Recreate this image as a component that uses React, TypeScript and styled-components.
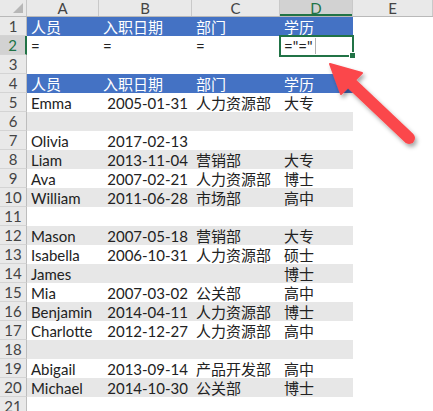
import React from "react";
import styled, { createGlobalStyle, css } from "styled-components";

const Global = createGlobalStyle`
  html, body { margin: 0; padding: 0; background: #fff; }
  body { width: 433px; height: 411px; overflow: hidden; }
`;

const COLS = "27px 72px 93px 88px 73px 80px";
const GREEN = "#217346";
const FONT = `Lato, "Noto Sans CJK SC", sans-serif`;

const Page = styled.div`
  position: relative;
  width: 433px;
  height: 411px;
  overflow: hidden;
  font-family: ${FONT};
  font-size: 15px;
  color: #222;
`;

const Sheet = styled.div`
  display: flex;
  flex-direction: column;
`;

const HeadRow = styled.div`
  display: grid;
  grid-template-columns: ${COLS};
  height: 17px;
  background: #e9e9e9;
  border-bottom: 1px solid #b9b9b9;
  box-sizing: border-box;
`;

const Corner = styled.div`
  position: relative;
  border-right: 1px solid #c6c6c6;
  &::after {
    content: "";
    position: absolute;
    right: 3px;
    bottom: 3px;
    width: 0;
    height: 0;
    border-left: 10px solid transparent;
    border-bottom: 10px solid #b7b7b7;
  }
`;

const ColHead = styled.div<{ $sel?: boolean }>`
  display: flex;
  align-items: center;
  justify-content: center;
  border-right: 1px solid #c9c9c9;
  color: #444;
  font-size: 15px;
  line-height: 16px;
  ${(p) =>
    p.$sel &&
    css`
      background: #d2d2d2;
      color: ${GREEN};
      box-shadow: inset 0 -2px 0 ${GREEN};
    `}
`;

const Row = styled.div`
  display: grid;
  grid-template-columns: ${COLS};
  height: 19px;
`;

const RowHead = styled.div<{ $sel?: boolean }>`
  display: flex;
  align-items: flex-end;
  justify-content: center;
  background: #e9e9e9;
  border-right: 1px solid #bdbdbd;
  border-bottom: 1px solid #d4d4d4;
  box-sizing: border-box;
  color: #444;
  line-height: 17px;
  ${(p) =>
    p.$sel &&
    css`
      background: #d2d2d2;
      color: ${GREEN};
      border-right: 2px solid ${GREEN};
    `}
`;

type Tone = "blue" | "gray" | "white";

const Cell = styled.div<{ $tone: Tone; $align?: "left" | "right"; $sel?: boolean }>`
  position: relative;
  display: flex;
  align-items: flex-end;
  justify-content: ${(p) => (p.$align === "right" ? "flex-end" : "flex-start")};
  padding: 0 4px 0 4px;
  white-space: nowrap;
  line-height: 17px;
  background: ${(p) => (p.$tone === "blue" ? "#4472c4" : p.$tone === "gray" ? "#e7e7e7" : "#fff")};
  color: ${(p) => (p.$tone === "blue" ? "#fff" : "#222")};
  ${(p) =>
    p.$sel &&
    css`
      &::after {
        content: "";
        position: absolute;
        left: -1px;
        top: -1px;
        right: -1px;
        bottom: -2px;
        border: 2px solid ${GREEN};
      }
      &::before {
        content: "";
        position: absolute;
        right: -3px;
        bottom: -4px;
        width: 5px;
        height: 5px;
        background: ${GREEN};
        border: 1px solid #fff;
        z-index: 1;
      }
    `}
`;

const Caret = styled.span`
  display: inline-block;
  width: 1px;
  height: 16px;
  margin: 0 0 1px 2px;
  background: #b0b0b0;
  align-self: flex-end;
`;

const EmptyCell = styled.div``;

const Arrow = styled.svg`
  position: absolute;
  left: 0;
  top: 0;
  pointer-events: none;
`;

type Data = { a?: string; b?: string; c?: string; d?: string };

const rows: Data[] = [
  { a: "Emma", b: "2005-01-31", c: "人力资源部", d: "大专" },
  {},
  { a: "Olivia", b: "2017-02-13" },
  { a: "Liam", b: "2013-11-04", c: "营销部", d: "大专" },
  { a: "Ava", b: "2007-02-21", c: "人力资源部", d: "博士" },
  { a: "William", b: "2011-06-28", c: "市场部", d: "高中" },
  {},
  { a: "Mason", b: "2007-05-18", c: "营销部", d: "大专" },
  { a: "Isabella", b: "2006-10-31", c: "人力资源部", d: "硕士" },
  { a: "James", d: "博士" },
  { a: "Mia", b: "2007-03-02", c: "公关部", d: "高中" },
  { a: "Benjamin", b: "2014-04-11", c: "人力资源部", d: "博士" },
  { a: "Charlotte", b: "2012-12-27", c: "人力资源部", d: "高中" },
  {},
  { a: "Abigail", b: "2013-09-14", c: "产品开发部", d: "高中" },
  { a: "Michael", b: "2014-10-30", c: "公关部", d: "博士" },
];

const headers = ["人员", "入职日期", "部门", "学历"];

function HeaderRow({ n }: { n: number }) {
  return (
    <Row>
      <RowHead>{n}</RowHead>
      {headers.map((h) => (
        <Cell key={h} $tone="blue">
          {h}
        </Cell>
      ))}
      <EmptyCell />
    </Row>
  );
}

export default function App() {
  return (
    <Page>
      <Global />
      <Sheet>
        <HeadRow>
          <Corner />
          <ColHead>A</ColHead>
          <ColHead>B</ColHead>
          <ColHead>C</ColHead>
          <ColHead $sel>D</ColHead>
          <ColHead>E</ColHead>
        </HeadRow>
        <HeaderRow n={1} />
        <Row>
          <RowHead $sel>2</RowHead>
          <Cell $tone="white">=</Cell>
          <Cell $tone="white">=</Cell>
          <Cell $tone="white">=</Cell>
          <Cell $tone="white" $sel>
            ="="<Caret />
          </Cell>
          <EmptyCell />
        </Row>
        <Row>
          <RowHead>3</RowHead>
        </Row>
        <HeaderRow n={4} />
        {rows.map((r, i) => {
          const n = i + 5;
          const tone: Tone = n % 2 === 0 ? "gray" : "white";
          return (
            <Row key={n}>
              <RowHead>{n}</RowHead>
              <Cell $tone={tone}>{r.a}</Cell>
              <Cell $tone={tone} $align="right">
                {r.b}
              </Cell>
              <Cell $tone={tone}>{r.c}</Cell>
              <Cell $tone={tone}>{r.d}</Cell>
              <EmptyCell />
            </Row>
          );
        })}
        <Row>
          <RowHead>21</RowHead>
        </Row>
      </Sheet>
      <Arrow width="433" height="411" viewBox="0 0 433 411">
        <defs>
          <filter id="sh" x="-30%" y="-30%" width="160%" height="160%">
            <feDropShadow dx="2" dy="3" stdDeviation="2" floodColor="#000" floodOpacity="0.35" />
          </filter>
        </defs>
        <g filter="url(#sh)" fill="#fb474b" stroke="#fb474b">
          <line x1="352" y1="84" x2="409" y2="138" strokeWidth="12" strokeLinecap="round" />
          <polygon points="330,64 362,73 341,94" strokeWidth="2" strokeLinejoin="round" />
        </g>
      </Arrow>
    </Page>
  );
}
